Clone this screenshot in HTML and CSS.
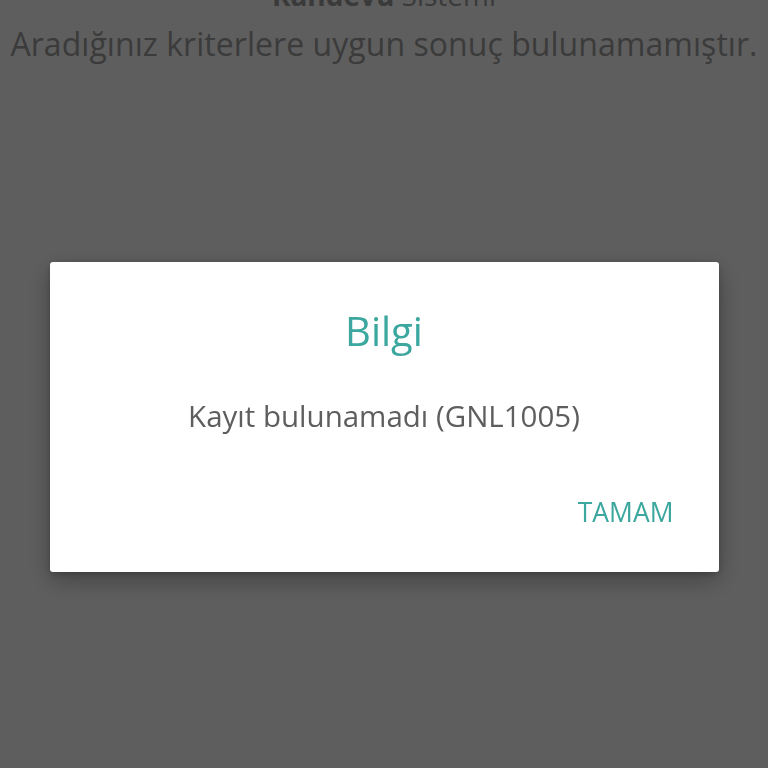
FILE: index.html
```html
<!DOCTYPE html>
<html lang="tr">
<head>
<meta charset="utf-8">
<title>Randevu Sistemi</title>
<link rel="stylesheet" href="styles.css">
</head>
<body>
<main class="page">
  <h1 class="page-title"><strong>Randevu</strong> Sistemi</h1>
  <p class="page-msg">Aradığınız kriterlere uygun sonuç bulunamamıştır.</p>
</main>
<div class="overlay">
  <div class="dialog">
    <h2 class="dialog-title">Bilgi</h2>
    <p class="dialog-msg">Kayıt bulunamadı (GNL1005)</p>
    <div class="dialog-actions">
      <button class="dialog-btn">TAMAM</button>
    </div>
  </div>
</div>
</body>
</html>
```
FILE: styles.css
```css
html, body {
  margin: 0;
  padding: 0;
  height: 100%;
  background: #ffffff;
  font-family: "Open Sans", "Liberation Sans", sans-serif;
  overflow: hidden;
}
.page {
  margin-top: -25px;
  text-align: center;
}
.page-title {
  margin: 0;
  font-size: 28px;
  line-height: 40px;
  font-weight: 400;
  color: #9d9d9d;
}
.page-title strong {
  font-weight: 700;
}
.page-msg {
  margin: 7px 0 0;
  font-size: 32px;
  line-height: 44px;
  letter-spacing: 0.05px;
  color: #a0a0a0;
}
.overlay {
  position: fixed;
  inset: 0;
  background: rgba(0, 0, 0, 0.63);
  display: flex;
  justify-content: center;
  align-items: flex-start;
  padding-top: 262px;
}
.dialog {
  width: 669px;
  height: 310px;
  box-sizing: border-box;
  background: #ffffff;
  border-radius: 3px;
  box-shadow: 0 8px 24px rgba(0, 0, 0, 0.3), 0 2px 6px rgba(0, 0, 0, 0.18);
  display: flex;
  flex-direction: column;
  align-items: center;
  padding: 44px 45px 0;
}
.dialog-title {
  margin: 0;
  font-size: 40px;
  line-height: 50px;
  font-weight: 400;
  color: #3ba79e;
}
.dialog-msg {
  margin: 42px 0 0;
  font-size: 29.5px;
  line-height: 36px;
  color: #5e5e5e;
}
.dialog-actions {
  align-self: stretch;
  display: flex;
  justify-content: flex-end;
  margin-top: 60px;
}
.dialog-btn {
  border: none;
  background: none;
  padding: 0;
  font-family: inherit;
  font-size: 26.5px;
  line-height: 36px;
  color: #3ba79e;
}
```
